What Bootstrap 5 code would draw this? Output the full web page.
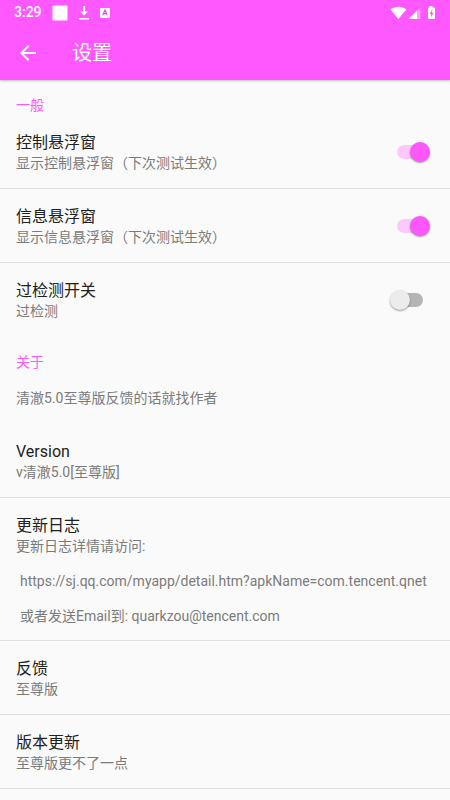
<!DOCTYPE html>
<html lang="zh-CN">
<head>
<meta charset="utf-8">
<meta name="viewport" content="width=device-width, initial-scale=1">
<title>设置</title>
<link href="https://cdn.jsdelivr.net/npm/bootstrap@5.3.0/dist/css/bootstrap.min.css" rel="stylesheet">
<style>
:root { --accent: #ff58ff; }
body { background: #fafafa; font-family: Roboto, "Noto Sans CJK SC", sans-serif; font-size: 14px; line-height: 18px; color: #7b7b7b; }
.app-header { background: var(--accent); box-shadow: 0 1px 2px rgba(0,0,0,.25); }
.status-bar { height: 25px; line-height: 25px; padding: 0 14px; font-weight: 500; }
.status-bar svg, .back-btn svg { display: block; }
.left-icons { gap: 11px; margin-left: 10px; }
.app-bar { height: 55px; gap: 32px; }
.app-title { font-size: 20px; line-height: 28px; font-weight: 400; }
.back-btn { line-height: 0; }
.section-title { color: var(--accent); font-size: 14px; line-height: 19px; font-weight: 400; padding: 16px 16px 0; }
.pref { padding: 17px 16px 16px; border-bottom: 1px solid #dedede; }
.pref.no-line { border-color: transparent; }
.pref.changelog { padding-bottom: 15px; }
.pref-title { color: #212121; font-size: 16px; line-height: 22px; font-weight: 400; }
.note { padding: 17px 16px; }
.log-line { margin-top: 17px; padding-left: 4px; }
.toggle { appearance: none; position: relative; width: 44px; height: 22px; cursor: pointer; }
.toggle::before { content: ""; position: absolute; left: 7px; top: 4px; width: 26px; height: 14px; border-radius: 7px; background: #b5b5b5; }
.toggle::after { content: ""; position: absolute; left: 0; top: 1px; width: 20px; height: 20px; border-radius: 50%; background: #ececec; box-shadow: 0 1px 2px rgba(0,0,0,.4); }
.toggle:checked::before { background: #fbcafb; }
.toggle:checked::after { left: 20px; background: #fb57fb; }
</style>
</head>
<body>
<header class="app-header text-white position-relative">
  <div class="status-bar d-flex align-items-center">
    <span>3:29</span>
    <div class="left-icons d-flex align-items-center">
      <svg width="16" height="16" viewBox="0 0 16 16" fill="#fff"><rect x=".5" y=".5" width="15" height="15" rx="1"/></svg>
      <svg width="10" height="14" viewBox="0 0 10 14" fill="#fff"><path d="M4 0h2v5.500h3L5 9.500 1 5.500h3zM0 12h10v1.500H0z"/></svg>
      <svg width="10" height="12" viewBox="0 0 10 12"><rect y="1" width="10" height="10" rx="1" fill="#fff"/><path d="M2.800 8.300 5 3l2.200 5.300M3.600 6.700h2.800" fill="none" stroke="#e04fe8" stroke-width="1.200"/></svg>
    </div>
    <div class="d-flex align-items-center ms-auto">
      <svg width="48" height="16" viewBox="0 0 48 16" fill="#fff">
        <path d="M2.500 4.500C7 .8 13.800.8 18.300 4.500L10.400 14z"/>
        <path d="M32.300 2.500V14H20.500z" fill-opacity=".4"/><path d="M29 5.500V14h-8.500z"/>
        <path fill-rule="evenodd" d="M41.500 1h3v1.500h1.500q1 0 1 1V13q0 1-1 1h-5q-1 0-1-1V3.500q0-1 1-1h.5zM44.300 4.500 41.500 9h1.600v3.500L45.500 7.800h-1.400z"/>
      </svg>
    </div>
  </div>
  <nav class="app-bar d-flex align-items-center px-3">
    <button type="button" class="back-btn btn p-0 border-0 text-white" aria-label="返回">
      <svg width="24" height="24" viewBox="0 0 24 24" fill="#fff"><path d="M20 11H7.830l5.590-5.590L12 4l-8 8 8 8 1.410-1.410L7.830 13H20z"/></svg>
    </button>
    <h1 class="app-title m-0">设置</h1>
  </nav>
</header>
<main>
  <section>
    <h2 class="section-title m-0">一般</h2>
    <div class="pref d-flex align-items-center justify-content-between">
      <label for="control"><span class="pref-title d-block">控制悬浮窗</span><span class="d-block">显示控制悬浮窗（下次测试生效）</span></label>
      <input class="toggle flex-shrink-0" type="checkbox" role="switch" id="control" checked>
    </div>
    <div class="pref d-flex align-items-center justify-content-between">
      <label for="info"><span class="pref-title d-block">信息悬浮窗</span><span class="d-block">显示信息悬浮窗（下次测试生效）</span></label>
      <input class="toggle flex-shrink-0" type="checkbox" role="switch" id="info" checked>
    </div>
    <div class="pref no-line d-flex align-items-center justify-content-between">
      <label for="bypass"><span class="pref-title d-block">过检测开关</span><span class="d-block">过检测</span></label>
      <input class="toggle flex-shrink-0" type="checkbox" role="switch" id="bypass">
    </div>
  </section>
  <section>
    <h2 class="section-title m-0">关于</h2>
    <p class="note m-0">清澈5.0至尊版反馈的话就找作者</p>
    <div class="pref">
      <h3 class="pref-title m-0">Version</h3>
      <p class="m-0">v清澈5.0[至尊版]</p>
    </div>
    <div class="pref changelog">
      <h3 class="pref-title m-0">更新日志</h3>
      <p class="m-0">更新日志详情请访问:</p>
      <p class="log-line mb-0 text-break">https://sj.qq.com/myapp/detail.htm?apkName=com.tencent.qnet</p>
      <p class="log-line mb-0">或者发送Email到: quarkzou@tencent.com</p>
    </div>
    <div class="pref">
      <h3 class="pref-title m-0">反馈</h3>
      <p class="m-0">至尊版</p>
    </div>
    <div class="pref">
      <h3 class="pref-title m-0">版本更新</h3>
      <p class="m-0">至尊版更不了一点</p>
    </div>
  </section>
</main>
<script src="https://cdn.jsdelivr.net/npm/bootstrap@5.3.0/dist/js/bootstrap.bundle.min.js"></script>
</body>
</html>
